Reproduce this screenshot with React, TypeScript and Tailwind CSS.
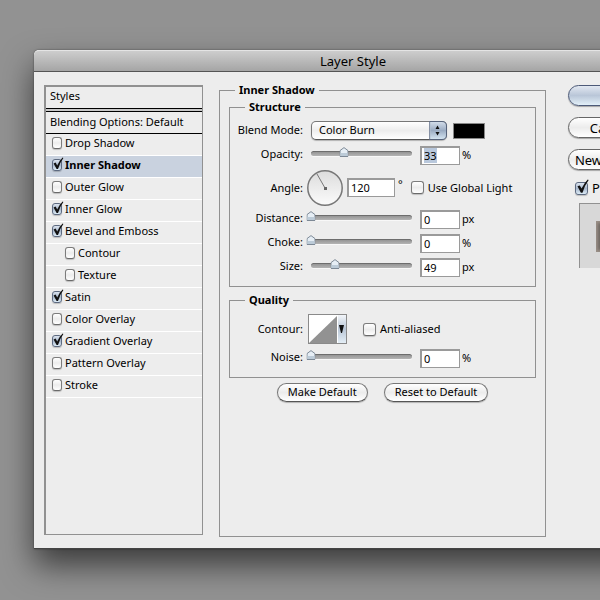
import { useId, useState } from "react";

const styleRows = [
  { name: "Drop Shadow", on: false },
  { name: "Inner Shadow", on: true, selected: true },
  { name: "Outer Glow", on: false },
  { name: "Inner Glow", on: true },
  { name: "Bevel and Emboss", on: true },
  { name: "Contour", on: false, nested: true },
  { name: "Texture", on: false, nested: true },
  { name: "Satin", on: true },
  { name: "Color Overlay", on: false },
  { name: "Gradient Overlay", on: true },
  { name: "Pattern Overlay", on: false },
  { name: "Stroke", on: false },
];

function Checkbox({ label, checked = false, large = false }: { label: string; checked?: boolean; large?: boolean }) {
  return (
    <label className={`flex items-center whitespace-nowrap ${large ? "gap-1" : "gap-[3px]"}`}>
      <span className="relative flex">
        <input
          type="checkbox"
          defaultChecked={checked}
          className={`peer appearance-none rounded-[3px] border border-[#7c7c7c] border-b-[#6a6a6a] bg-linear-to-b from-white via-[#ececec] to-white shadow-[0_1px_1px_rgba(0,0,0,0.2)] checked:border-[#5d6a80] checked:from-[#dde5f0] checked:via-[#a9b8cc] checked:to-[#dcebf6] ${
            large ? "h-[13px] w-[13px]" : "h-3 w-[10px]"
          }`}
        />
        <svg
          viewBox="0 0 12 14"
          className={`pointer-events-none absolute bottom-0 left-0 hidden peer-checked:block ${
            large ? "h-4 w-[15px]" : "h-[14px] w-3"
          }`}
        >
          <path d="M1.6 6.4 L3.6 5.6 L5.2 8.4 Q7.6 3.2 10.6 0.4 L11.4 0.9 Q8 5.4 6 12 L4.6 12 Z" fill="#111" />
        </svg>
      </span>
      {label}
    </label>
  );
}

function Slider({ label, initial, max = 100 }: { label: string; initial: number; max?: number }) {
  const [value, setValue] = useState(initial);

  return (
    <div className="relative mb-1 h-[11px] w-[109px] px-1">
      <div className="relative top-[3px] h-[5px] rounded-full border-t border-[#6d6d6d] bg-linear-to-b from-[#959595] to-[#b4b4b4] shadow-[0_1px_0_#f8f8f8]">
        <svg
          viewBox="0 0 9 10"
          className="absolute -top-[5px] h-[10px] w-[9px] -translate-x-1/2"
          style={{ left: `${(value / max) * 100}%` }}
        >
          <path d="M0.5 3.6 L4.5 0.6 L8.5 3.6 V9.5 H0.5 Z" fill="#e6eef5" stroke="#7d8996" />
          <path d="M1 6 H8 V9 H1 Z" fill="#bccbd8" />
        </svg>
      </div>
      <input
        type="range"
        aria-label={label}
        min={0}
        max={max}
        value={value}
        onChange={(e) => setValue(Number(e.target.value))}
        className="absolute inset-0 w-full opacity-0"
      />
    </div>
  );
}

const rowLabel = "w-[73px] shrink-0 text-right";
const field =
  "h-[19px] border-t-2 border-r border-b border-l-2 border-[#9a9a9a] bg-white pb-[2px] pl-[2px] leading-4 outline-none";

type SliderRowProps = { label: string; value: number; unit: string; max?: number; focused?: boolean };

function SliderRow({ label, value, unit, max, focused }: SliderRowProps) {
  const id = useId();

  return (
    <div className="flex h-[19px] items-center gap-1">
      <label htmlFor={id} className={`${rowLabel} mb-1`}>
        {label}:
      </label>
      <Slider label={label} initial={value} max={max} />
      <div className="flex items-center gap-[2px]">
        <input
          id={id}
          type="text"
          defaultValue={value}
          autoFocus={focused}
          onFocus={(e) => e.target.select()}
          className={`${field} w-10 selection:bg-[#b9c8dc] selection:text-black`}
        />
        <span className="mb-[2px]">{unit}</span>
      </div>
    </div>
  );
}

function PushButton({ children }: { children: string }) {
  return (
    <button className="h-[19px] rounded-full border border-[#777] border-b-[#555] bg-linear-to-b from-white via-[#ececec] to-white px-[10px] pb-[2px] leading-4 shadow-[0_1px_1px_rgba(0,0,0,0.25)]">
      {children}
    </button>
  );
}

export default function App() {
  return (
    <main className="flex min-h-screen flex-col overflow-hidden bg-[#929292] pt-[50px] pb-[51px] pl-[34px] font-['Noto_Sans','Open_Sans',sans-serif] text-[11px] leading-4 text-black">
      <div className="-mr-[72px] flex flex-1 flex-col rounded-t-[5px] border-b border-[#444] bg-[#ededed] shadow-[0_16px_32px_rgba(0,0,0,0.6),0_0_2px_rgba(0,0,0,0.5)]">
        <header className="h-[22px] shrink-0 rounded-t-[5px] border-t border-b border-t-[#e4e4e4] border-b-[#555] bg-linear-to-b from-[#cdcdcd] to-[#a5a5a5] text-center">
          <h1 className="text-[13px] leading-5">Layer Style</h1>
        </header>

        <div className="flex flex-1 pt-[10px] pr-5 pb-[11px] pl-[10px]">
          <section className="mt-[3px] mb-[2px] w-[159px] shrink-0 border-t-2 border-r border-b border-l-2 border-[#919191]">
            <h2 className="h-[21px] pt-px pl-1">Styles</h2>
            <div className="h-1 border-y border-black bg-[#c8c8c8]" />
            <button className="block h-[22px] w-full border-b border-black pb-[2px] pl-1 text-left whitespace-nowrap">
              Blending Options: Default
            </button>
            <ul>
              {styleRows.map((row) => (
                <li
                  key={row.name}
                  className={`flex h-[22px] items-center border-b border-white pb-1 ${
                    row.nested ? "pl-[19px]" : "pl-[6px]"
                  } ${row.selected ? "bg-[#c9d2df] font-bold" : ""}`}
                >
                  <Checkbox label={row.name} checked={row.on} />
                </li>
              ))}
            </ul>
          </section>

          <fieldset className="ml-4 min-w-0 flex-1 border border-[#919191] pr-[9px] pl-[9px]">
            <legend className="ml-[6px] px-1 font-bold">Inner Shadow</legend>

            <fieldset className="mt-px border border-[#919191] pt-[6px] pb-[9px]">
              <legend className="ml-[15px] px-1 font-bold">Structure</legend>
              <div className="flex flex-col gap-[5px]">
                <div className="flex h-5 items-start gap-1">
                  <label htmlFor="blend" className={`${rowLabel} mt-px`}>
                    Blend Mode:
                  </label>
                  <div className="relative ml-1 flex">
                    <select
                      id="blend"
                      className="h-[19px] w-[136px] appearance-none rounded-[5px] border border-[#777] border-b-[#555] bg-linear-to-b from-white via-[#ededed] to-white pb-[2px] pl-[7px] leading-4 shadow-[0_1px_1px_rgba(0,0,0,0.25)]"
                    >
                      <option>Color Burn</option>
                    </select>
                    <svg viewBox="0 0 18 19" className="pointer-events-none absolute top-0 right-0 h-[19px] w-[18px]">
                      <defs>
                        <linearGradient id="cap" x1="0" y1="0" x2="0" y2="1">
                          <stop offset="0" stopColor="#d5dfeb" />
                          <stop offset="0.5" stopColor="#9aabc2" />
                          <stop offset="1" stopColor="#d8e8f4" />
                        </linearGradient>
                      </defs>
                      <path
                        d="M0.5 0.5 H13 Q17.5 0.5 17.5 5 V14 Q17.5 18.5 13 18.5 H0.5 Z"
                        fill="url(#cap)"
                        stroke="#56627a"
                      />
                      <path d="M1 1 V18" stroke="#b4bfce" />
                      <path d="M6.5 8 L8.5 4.5 L10.5 8 Z M6.5 11 L8.5 14.5 L10.5 11 Z" fill="#111" />
                    </svg>
                  </div>
                  <button
                    aria-label="Shadow color"
                    className="mt-[2px] ml-[2px] h-4 w-8 border border-[#888] bg-black"
                  />
                </div>

                <SliderRow label="Opacity" value={33} unit="%" focused />

                <div className="flex h-[35px] items-center gap-1">
                  <label htmlFor="angle" className={rowLabel}>
                    Angle:
                  </label>
                  <svg viewBox="0 0 36 36" className="size-9 shrink-0">
                    <defs>
                      <linearGradient id="dial" x1="0" y1="0" x2="0" y2="1">
                        <stop offset="0" stopColor="#dcdcdc" />
                        <stop offset="1" stopColor="#fbfbfb" />
                      </linearGradient>
                    </defs>
                    <circle cx="18" cy="18" r="17.2" fill="url(#dial)" stroke="#777" strokeWidth="1.5" />
                    <path d="M18 18 L10 4" stroke="#777" />
                    <rect x="17" y="17" width="3" height="3" fill="#666" />
                  </svg>
                  <input id="angle" type="text" defaultValue="120" className={`${field} w-12`} />
                  <span className="-ml-px self-start pt-[6px]">°</span>
                  <div className="ml-1">
                    <Checkbox label="Use Global Light" large />
                  </div>
                </div>

                <SliderRow label="Distance" value={0} unit="px" />
                <SliderRow label="Choke" value={0} unit="%" />
                <SliderRow label="Size" value={49} unit="px" max={204} />
              </div>
            </fieldset>

            <fieldset className="mt-[5px] border border-[#919191] pt-[6px] pb-[9px]">
              <legend className="ml-[15px] px-1 font-bold">Quality</legend>
              <div className="flex flex-col gap-[5px]">
                <div className="flex items-center gap-1">
                  <span className={rowLabel}>Contour:</span>
                  <button aria-label="Contour" className="ml-px">
                    <svg viewBox="0 0 39 30" className="block h-[30px] w-[39px]">
                      <defs>
                        <linearGradient id="contour" x1="0" y1="0" x2="0" y2="1">
                          <stop offset="0" stopColor="#f3f6fa" />
                          <stop offset="0.5" stopColor="#b9c6d6" />
                          <stop offset="1" stopColor="#e4eef6" />
                        </linearGradient>
                      </defs>
                      <rect x="0.5" y="0.5" width="38" height="29" fill="#fff" stroke="#8a8a8a" />
                      <path d="M1 29 L29 2 V29 Z" fill="#929292" />
                      <path d="M30 1 H38 V29 H30 Z" fill="url(#contour)" />
                      <path d="M31 11 H36 L34 19 H33 Z" fill="#111" />
                    </svg>
                  </button>
                  <div className="ml-3">
                    <Checkbox label="Anti-aliased" large />
                  </div>
                </div>
                <SliderRow label="Noise" value={0} unit="%" />
              </div>
            </fieldset>

            <div className="mt-[5px] flex justify-center gap-4">
              <PushButton>Make Default</PushButton>
              <PushButton>Reset to Default</PushButton>
            </div>
          </fieldset>

          <aside className="mt-[3px] ml-[22px] w-[84px] shrink-0 text-[13px]">
            <div className="flex flex-col gap-[11px]">
              <button className="h-[21px] rounded-full border border-[#4d5a78] bg-linear-to-b from-[#e2e8f1] via-[#b9c6d8] to-[#e3f0f8] shadow-[0_1px_1px_rgba(0,0,0,0.3)]">
                OK
              </button>
              <button className="h-[21px] rounded-full border border-[#666] bg-linear-to-b from-white via-[#ececec] to-white shadow-[0_1px_1px_rgba(0,0,0,0.3)]">
                Cancel
              </button>
              <button className="h-[21px] rounded-full border border-[#666] bg-linear-to-b from-white via-[#ececec] to-white whitespace-nowrap shadow-[0_1px_1px_rgba(0,0,0,0.3)]">
                New Style...
              </button>
            </div>
            <div className="mt-[10px] pl-[7px]">
              <Checkbox label="Preview" checked large />
            </div>
            <div className="mt-[7px] ml-[11px] flex h-[65px] w-16 items-center justify-center border-t border-l border-[#919191] bg-[#d8d8d8]">
              <div className="h-[31px] w-[31px] bg-[#6f6863] shadow-[inset_0_0_3px_2px_#9a8f87]" />
            </div>
          </aside>
        </div>
      </div>
    </main>
  );
}
